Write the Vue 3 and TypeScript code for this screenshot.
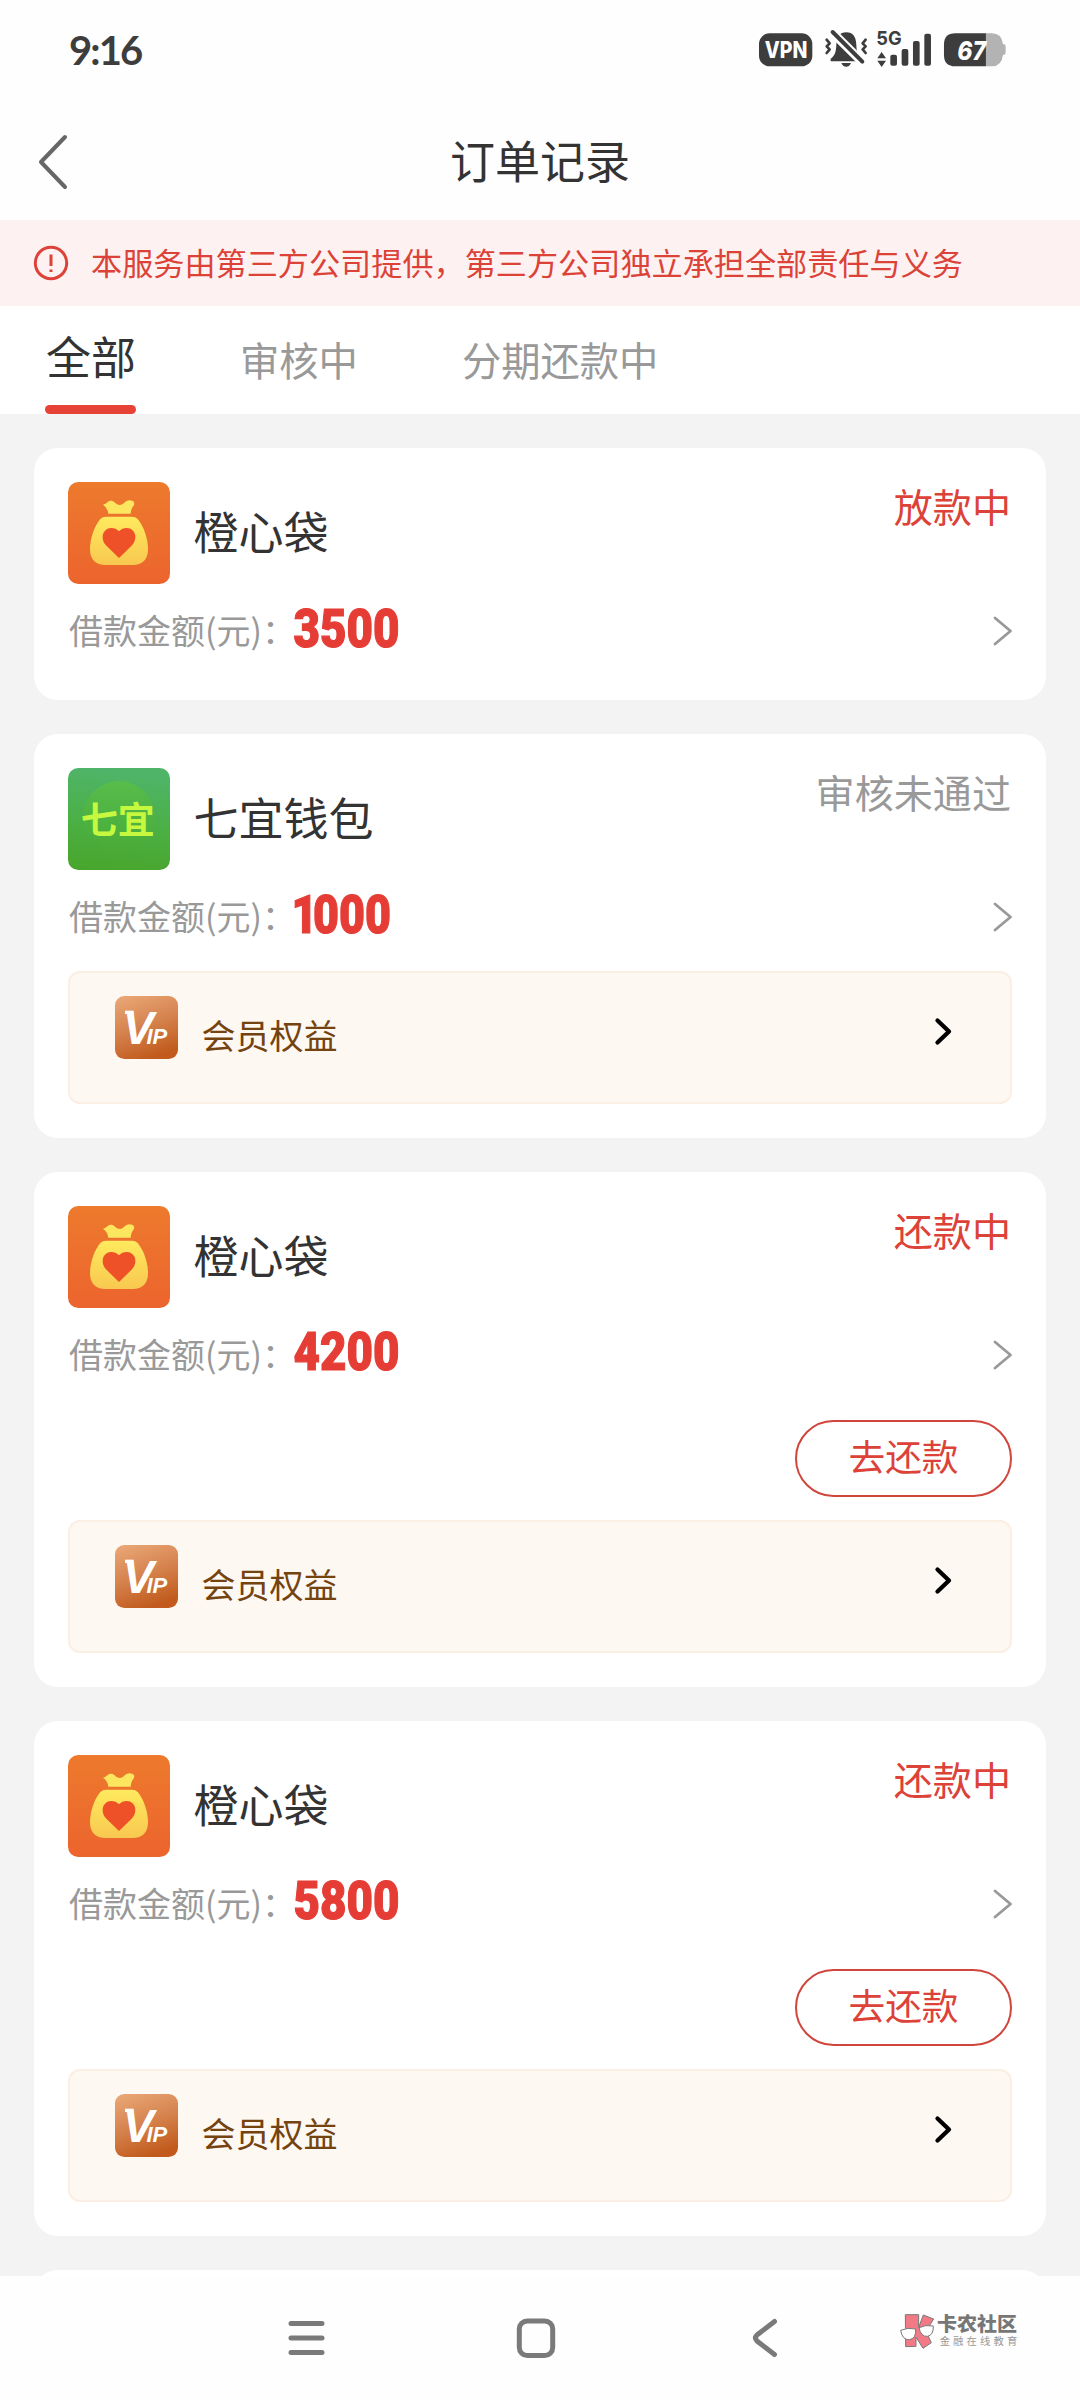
<script setup lang="ts">
interface Order {
  name: string
  logo: 'bag' | 'qiyi'
  amount: string
  status: string
  muted?: boolean
  repay?: boolean
  vip?: boolean
}

const tabs: string[] = ['全部', '审核中', '分期还款中']

const orders: Order[] = [
  { name: '橙心袋', logo: 'bag', amount: '3500', status: '放款中' },
  { name: '七宜钱包', logo: 'qiyi', amount: '1000', status: '审核未通过', muted: true, vip: true },
  { name: '橙心袋', logo: 'bag', amount: '4200', status: '还款中', repay: true, vip: true },
  { name: '橙心袋', logo: 'bag', amount: '5800', status: '还款中', repay: true, vip: true },
]
</script>

<template>
  <div class="page">
    <header class="statusbar">
      <span class="clock">9:16</span>
      <svg class="indicators" viewBox="115 65 745 150">
        <rect x="115" y="99" width="160" height="99" rx="32" fill="#3d3d3d" />
        <text x="132" y="173" class="ind-vpn" textLength="128" lengthAdjust="spacingAndGlyphs">VPN</text>
        <g fill="#3d3d3d">
          <path d="M330 183v-8c14-10 16-22 17-42 1-24 10-37 30-37s29 13 30 37c1 20 3 32 17 42v8z" />
          <path d="M362 188h29q-4 11-14.500 11t-14.500-11z" />
        </g>
        <path d="M327 88L432 192" stroke="#fefefe" stroke-width="27" />
        <g fill="none" stroke="#3d3d3d" stroke-linecap="round" stroke-linejoin="round">
          <path d="M336 95L425 184" stroke-width="12" />
          <path d="M318 118l9 11-9 9 9 9-9 11M435 118l-9 11 9 9-9 9 9 11" stroke-width="8" />
        </g>
        <text x="467" y="135" class="ind-5g" textLength="76" lengthAdjust="spacingAndGlyphs">5G</text>
        <g fill="#3d3d3d">
          <path d="M483 155l13 19h-26zM483 200l13-19h-26z" />
          <rect x="509" y="163" width="20" height="33" rx="6" />
          <rect x="543" y="146" width="20" height="50" rx="6" />
          <rect x="577" y="122" width="20" height="74" rx="6" />
          <rect x="611" y="100" width="20" height="96" rx="6" />
          <path d="M704 99h92v99h-92q-34 0-34-34v-31q0-34 34-34z" />
        </g>
        <path d="M796 99h18q29 0 33 32 8 0 8 8v17q0 8-8 8-4 34-33 34h-18z" fill="#b3b3b3" />
        <text x="710" y="178" class="ind-bat" textLength="86" lengthAdjust="spacingAndGlyphs">67</text>
      </svg>
    </header>

    <div class="titlebar">
      <svg class="back" viewBox="0 0 30 56"><path d="M27 3L3 28L27 53" /></svg>
      <h1>订单记录</h1>
    </div>

    <div class="notice">
      <svg class="alert" viewBox="0 0 36 36">
        <circle cx="18" cy="18" r="15.700" />
        <path d="M18 9.500v11.500M18 24.500v2.500" />
      </svg>
      <span>本服务由第三方公司提供，第三方公司独立承担全部责任与义务</span>
    </div>

    <nav class="tabs">
      <span v-for="(tab, i) in tabs" :key="tab" class="tab" :class="{ active: i === 0 }">{{ tab }}</span>
    </nav>

    <main class="list">
      <article v-for="(order, i) in orders" :key="i" class="card">
        <div class="head">
          <svg v-if="order.logo === 'bag'" class="logo" viewBox="144 156 306 306">
            <defs>
              <linearGradient id="bagBg" x1="0" y1="0" x2="0" y2="1">
                <stop offset="0" stop-color="#ed7a2d" />
                <stop offset="1" stop-color="#ec642d" />
              </linearGradient>
              <linearGradient id="bagBody" x1="0" y1="0" x2="0" y2="1">
                <stop offset="0" stop-color="#ffea5e" />
                <stop offset="1" stop-color="#f8c850" />
              </linearGradient>
            </defs>
            <rect x="144" y="156" width="306" height="306" rx="31" fill="url(#bagBg)" />
            <path d="M249 224q8-2 14-8c7-6 15-5 21 1 8 9 19 11 27 3 8-9 18-12 27-7 6 3 6 10 2 15-5 6-7 13-8 23h-67q-2-17-16-27z" fill="#fce65f" />
            <path d="M258 260h78q10 0 17 7c17 20 31 57 31 91 0 31-17 47-46 47h-82c-29 0-46-16-46-47 0-34 14-71 31-91q7-7 17-7z" fill="url(#bagBody)" />
            <path d="M297 384L260 348C246 335 244 313 255 302 267 290 287 293 297 304 307 293 327 290 339 302 350 313 348 335 334 348z" fill="#ee5127" />
          </svg>
          <svg v-else class="logo" viewBox="144 144 306 306">
            <defs>
              <linearGradient id="qiyiBg" x1="0.100" y1="0" x2="0" y2="1">
                <stop offset="0" stop-color="#4fb468" />
                <stop offset="0.500" stop-color="#4bb045" />
                <stop offset="1" stop-color="#49a52b" />
              </linearGradient>
              <linearGradient id="qiyiDisc" x1="0" y1="0" x2="0" y2="1">
                <stop offset="0" stop-color="#58bd49" />
                <stop offset="1" stop-color="#4bad31" stop-opacity="0.200" />
              </linearGradient>
            </defs>
            <rect x="144" y="144" width="306" height="306" rx="31" fill="url(#qiyiBg)" />
            <circle cx="297" cy="289" r="106" fill="url(#qiyiDisc)" />
            <text x="182" y="342" class="qiyi">七宜</text>
          </svg>
          <span class="name">{{ order.name }}</span>
          <span class="status" :class="{ muted: order.muted }">{{ order.status }}</span>
        </div>
        <div class="row">
          <span class="label">借款金额(元)：</span>
          <svg class="amount" width="120" height="64" viewBox="0 0 120 64">
            <text
              :x="order.amount[0] === '1' ? -2.500 : -0.500"
              y="50.500"
              :dx="order.amount[0] === '1' ? '0 -5.500' : '0'"
              :textLength="order.amount[0] === '1' ? 99.500 : 106"
              lengthAdjust="spacingAndGlyphs"
            >{{ order.amount }}</text>
          </svg>
          <svg class="more" viewBox="0 0 20 32"><path d="M3 3L18.500 16L3 29" /></svg>
        </div>
        <div v-if="order.repay" class="actions"><button class="repay">去还款</button></div>
        <div v-if="order.vip" class="vip">
          <svg class="vip-logo" viewBox="285 828 189 189">
            <defs>
              <linearGradient id="vipBg" x1="0.200" y1="0" x2="0.550" y2="1">
                <stop offset="0" stop-color="#e8a574" />
                <stop offset="0.500" stop-color="#d5824d" />
                <stop offset="1" stop-color="#c15a1c" />
              </linearGradient>
            </defs>
            <rect x="285" y="828" width="189" height="189" rx="28" fill="url(#vipBg)" />
            <rect x="315" y="872" width="26" height="10" fill="#fff" />
            <text x="308" y="972" class="vip-v">V<tspan class="vip-ip" dx="-22">IP</tspan></text>
          </svg>
          <span class="vip-text">会员权益</span>
          <svg class="vip-more" viewBox="0 0 20 32"><path d="M4.500 4.500L16 15.500L4.500 26.500" /></svg>
        </div>
      </article>
      <article class="card next"></article>
    </main>

    <footer class="sysnav">
      <svg class="menu" width="40" height="40" viewBox="0 0 40 40"><path d="M5 5.500H36M5 20H36M5 34.500H36" /></svg>
      <svg class="home" width="40" height="40" viewBox="0 0 40 40"><rect x="3.300" y="3" width="33.400" height="34.500" rx="8" /></svg>
      <svg class="prev" width="30" height="40" viewBox="0 0 30 40"><path d="M24.500 3.500L7 17Q4 20 7 23L24.500 36.500" /></svg>
      <svg class="mark" viewBox="120 135 370 140">
        <g stroke="#777" stroke-width="3" stroke-linejoin="round">
          <path d="M136 161h40v38l14-37 31 12-23 37 16 34-25 17-21-34v28l-31 1z" fill="#f27a86" />
          <path d="M122 208q22-10 45-4 2 28-18 32-22 2-27-28z" fill="#fff" />
          <path d="M177 200q20-10 43-5 1 27-17 31-20 2-26-26z" fill="#fff" />
        </g>
        <text x="231" y="211" class="mark-main" textLength="240" lengthAdjust="spacingAndGlyphs">卡农社区</text>
        <text x="239" y="253" class="mark-sub" textLength="233">金融在线教育</text>
      </svg>
    </footer>
  </div>
</template>

<style>
body {
  margin: 0;
  background: #fff;
}
</style>

<style scoped>
.page {
  width: 1080px;
  height: 2400px;
  display: flex;
  flex-direction: column;
  overflow: hidden;
  background: #fefefe;
  color: #333;
  font-family: "Noto Sans CJK SC", sans-serif;
}
svg {
  display: block;
  flex: none;
  overflow: visible;
}
.statusbar {
  height: 104px;
  box-sizing: border-box;
  padding: 21px 73px 0 69px;
  display: flex;
  justify-content: space-between;
  align-items: flex-start;
}
.clock {
  margin-top: 5px;
  font: 700 40px/48px Lato, sans-serif;
  letter-spacing: -1.900px;
  color: #3d3d3d;
}
.indicators {
  width: 248.300px;
  height: 50px;
  margin-top: 0.700px;
}
.ind-vpn {
  font: 800 69px Inter, sans-serif;
  fill: #fff;
}
.ind-5g {
  font: 700 58px Inter, sans-serif;
  fill: #3d3d3d;
}
.ind-bat {
  font: italic 800 79px Inter, sans-serif;
  fill: #fff;
}
.titlebar {
  height: 115.500px;
  display: grid;
  grid-template-columns: 66px 1fr 66px;
  align-items: center;
}
.back {
  width: 30px;
  height: 56px;
  margin-left: 38px;
  fill: none;
  stroke: #666;
  stroke-width: 4;
  stroke-linecap: round;
  stroke-linejoin: round;
}
h1 {
  margin: 0 0 4px;
  text-align: center;
  font-size: 45px;
  line-height: 60px;
  font-weight: 400;
}
.notice {
  height: 86.500px;
  display: flex;
  align-items: center;
  gap: 22px;
  padding-left: 33px;
  background: #fdf2f1;
  color: #dc4238;
  font-size: 31.150px;
  line-height: 46px;
  white-space: nowrap;
}
.notice span {
  padding-bottom: 1px;
}
.alert {
  width: 36px;
  height: 36px;
  margin-top: 1px;
  fill: none;
  stroke: #dc4238;
  stroke-width: 3;
}
.tabs {
  height: 108px;
  display: flex;
  gap: 103px;
  padding-left: 45px;
  background: #fff;
}
.tab {
  height: 108px;
  box-sizing: border-box;
  padding-top: 24px;
  font-size: 39.300px;
  line-height: 58px;
  color: #999;
  text-indent: 1px;
}
.tab.active {
  padding-top: 21px;
  font-size: 45px;
  color: #333;
}
.tab.active::after {
  content: "";
  display: block;
  height: 9px;
  margin-top: 20px;
  border-radius: 5px;
  background: #e64236;
}
.list {
  flex: 1;
  min-height: 0;
  overflow: hidden;
  display: flex;
  flex-direction: column;
  gap: 34px;
  padding: 34px 34px 0;
  background: #f3f3f3;
}
.card {
  flex: none;
  padding: 34px;
  border-radius: 24px;
  background: #fff;
}
.next {
  height: 160px;
}
.head {
  height: 102px;
  display: flex;
  align-items: center;
}
.logo {
  width: 102px;
  height: 102px;
}
.qiyi {
  font: 700 111px "Noto Sans CJK SC", sans-serif;
  fill: #c5f83f;
}
.name {
  margin: 0 0 4px 23.500px;
  font-size: 45px;
  line-height: 60px;
}
.status {
  align-self: flex-start;
  margin: -6px 1px 0 auto;
  font-size: 39.100px;
  line-height: 58px;
  color: #dc4238;
}
.status.muted {
  color: #999;
}
.row {
  height: 68px;
  padding-top: 14px;
  display: flex;
  align-items: center;
}
.label {
  width: 225px;
  margin: 0 0 4px 1px;
  font-size: 34px;
  line-height: 50px;
  white-space: nowrap;
  color: #999;
}
.amount {
  margin-top: -9px;
}
.amount text {
  font: 900 54px Roboto, sans-serif;
  fill: #e53d35;
  stroke: #e53d35;
  stroke-width: 1.200;
}
.more {
  width: 20px;
  height: 32px;
  margin: 0 0 2px auto;
  fill: none;
  stroke: #999;
  stroke-width: 2.800;
  stroke-linecap: round;
  stroke-linejoin: round;
}
.actions {
  display: flex;
  justify-content: flex-end;
  margin: 30px 0 23px;
}
.repay {
  width: 217px;
  height: 77.500px;
  padding: 0 0 6px;
  border: 2px solid #d0453c;
  border-radius: 39px;
  background: #fff;
  color: #dc4238;
  font: 400 36.700px/54px "Noto Sans CJK SC", sans-serif;
}
.vip {
  height: 132.500px;
  margin-top: 19px;
  box-sizing: border-box;
  display: flex;
  align-items: flex-start;
  padding: 23px 57px 0 45px;
  border: 2px solid #fbeee3;
  border-radius: 12px;
  background: #fdf8f2;
}
.vip-logo {
  width: 63px;
  height: 63px;
}
.vip-v {
  font: italic 700 140px "Liberation Sans", sans-serif;
  fill: #fff;
}
.vip-ip {
  font-size: 66px;
}
.vip-text {
  margin: 13.500px 0 0 23.500px;
  font-size: 34px;
  line-height: 50px;
  color: #74430f;
}
.vip-more {
  width: 20px;
  height: 32px;
  margin: 20px 0 0 auto;
  fill: none;
  stroke: #000;
  stroke-width: 4.300;
  stroke-linecap: round;
  stroke-linejoin: round;
}
.sysnav {
  position: relative;
  height: 124px;
  box-sizing: border-box;
  display: flex;
  align-items: flex-start;
  padding: 42px 0 0 286px;
  background: #fefefe;
}
.sysnav > svg:not(.mark) {
  fill: none;
  stroke: #7a7a7a;
  stroke-width: 5;
  stroke-linecap: round;
}
.home {
  margin-left: 190px;
}
.prev {
  margin-left: 194px;
}
.mark {
  position: absolute;
  left: 900px;
  top: 30px;
  width: 123.300px;
  height: 46.700px;
}
.mark-main {
  font: 900 58px "Noto Sans CJK SC", sans-serif;
  fill: #777;
}
.mark-sub {
  font: 400 31px "Noto Sans CJK SC", sans-serif;
  fill: #999;
}
</style>
